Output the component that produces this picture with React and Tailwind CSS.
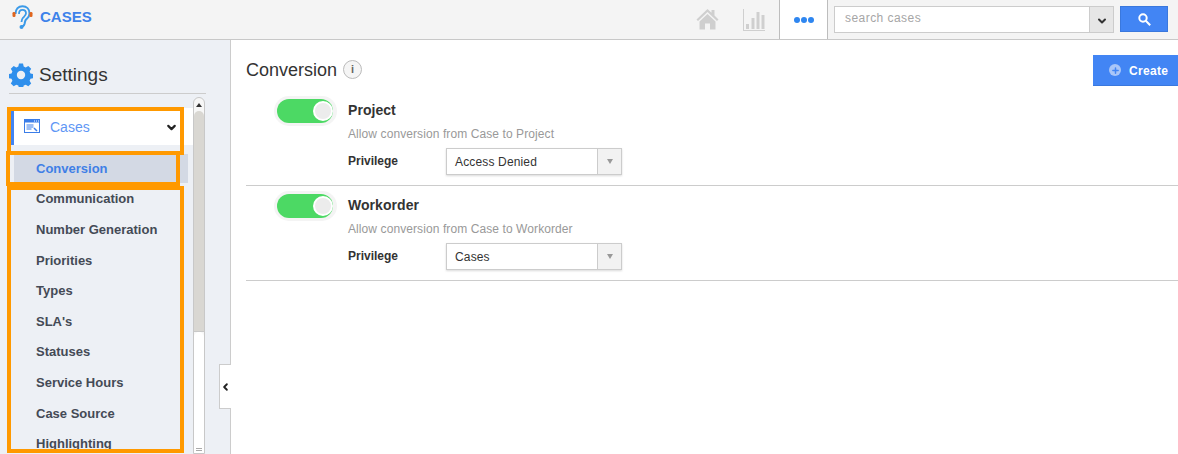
import { ChevronDown, ChevronLeft, Plus } from 'lucide-react';

const MENU_ITEMS = ['Communication', 'Number Generation', 'Priorities', 'Types', "SLA's", 'Statuses', 'Service Hours', 'Case Source', 'Highlighting'];

const Logo = () => (
  <svg width="21" height="25" viewBox="0 0 21 25" fill="none">
    <path d="M3.5 9C3.5 4 6.5 1.2 10.5 1.2C14.5 1.2 17.5 4 17.5 8.5C17.5 12 15.5 13 14 14.5C13 15.5 13 17 12.5 19C12 20.5 11 21.5 9.5 21.5" stroke="#3b9ae8" strokeWidth="2" />
    <path d="M7 9C7 6.5 8.5 4.8 10.5 4.8C12.5 4.8 14 6.3 14 8.3C14 10.5 12 11.5 10.8 13C10 14 9.7 15.5 9.5 17" stroke="#3b9ae8" strokeWidth="1.8" />
    <circle cx="9.5" cy="22" r="2" fill="#3b9ae8" />
    <rect x="0.5" y="7" width="3" height="5" rx="1.2" fill="#e0661f" />
    <rect x="17.5" y="7" width="3" height="5" rx="1.2" fill="#e0661f" />
  </svg>
);

const HomeIcon = () => (
  <svg width="23" height="21" viewBox="0 0 23 21" fill="#cfcfcf">
    <path d="M11.5 0L0.5 10.5L2 12L11.5 3L21 12L22.5 10.5L18.5 6.6V1H15.5V3.8Z" />
    <path d="M11.5 5L3.5 12.5V20.5H9V14.5H14V20.5H19.5V12.5Z" />
  </svg>
);

const ChartIcon = () => (
  <svg width="22" height="22" viewBox="0 0 22 22" fill="#cfcfcf">
    <rect x="0" y="0" width="1" height="22" />
    <rect x="0" y="21" width="22" height="1" />
    <rect x="3" y="15" width="3" height="5" />
    <rect x="8.5" y="9" width="3" height="11" />
    <rect x="13.5" y="3" width="3" height="17" />
    <rect x="18.5" y="6" width="3" height="14" />
  </svg>
);

const SearchGlyph = () => (
  <svg width="13" height="13" viewBox="0 0 13 13" fill="none" stroke="#ffffff">
    <circle cx="5" cy="5" r="3.7" strokeWidth="2" />
    <path d="M7.8 7.8L12.2 12.2" strokeWidth="2" />
  </svg>
);

const GearIcon = () => (
  <svg width="24" height="24" viewBox="0 0 24 24" fill="#2f8fec">
    <path d="M10 1h4l.7 3 2 .9 2.6-1.6 2.9 2.9-1.6 2.6.9 2 3 .7v4l-3 .7-.9 2 1.6 2.6-2.9 2.9-2.6-1.6-2 .9-.7 2.6h-4l-.7-2.6-2-.9-2.6 1.6-2.9-2.9 1.6-2.6-.9-2-3-.7v-4l3-.7.9-2-1.6-2.6 2.9-2.9 2.6 1.6 2-.9z" transform="translate(0 -0.4)" />
    <circle cx="12" cy="12" r="4.2" fill="#edf0f5" />
  </svg>
);

const CasesIcon = () => (
  <svg width="16" height="14" viewBox="0 0 16 14" fill="none">
    <rect x="0.5" y="0.5" width="15" height="13" stroke="#3b7de8" />
    <rect x="0.5" y="0.5" width="15" height="3" fill="#3b7de8" />
    <path d="M10 2h1M12 2h1M14 2h1" stroke="#fff" />
    <path d="M2.5 6h7M2.5 8h7M2.5 10h5" stroke="#3b7de8" />
    <path d="M10 9l3 3" stroke="#3b7de8" strokeWidth="1.5" />
  </svg>
);

const Toggle = () => (
  <div className="w-[63px] h-[30px] rounded-full bg-[#f4f4f4] p-[3px] shrink-0">
    <div className="h-[24px] w-[56px] rounded-full bg-[#4cd964] flex items-center justify-end">
      <div className="w-[20px] h-[20px] rounded-full bg-[#ececec] border-2 border-white" />
    </div>
  </div>
);

const ConversionRow = ({ title, description, privilege, rowClass }) => (
  <div className={`flex border-b border-[#cccccc] ${rowClass}`}>
    <div className="w-[102px] pl-[28px] -mt-[1px]">
      <Toggle />
    </div>
    <div className="flex-1">
      <div className="text-[14px] leading-[20px] font-bold text-[#333333] mt-[3px] tracking-[0.05px]">{title}</div>
      <div className="text-[12px] leading-[16px] text-[#999999] mt-[6px] tracking-[0.09px]">{description}</div>
      <div className="flex items-center mt-[6px]">
        <div className="w-[98px] text-[12px] font-bold text-[#333333] -mt-[2px]">{privilege.label}</div>
        <div className="w-[176px] h-[27px] flex border border-[#cccccc] bg-white shadow-[0_1px_2px_rgba(0,0,0,0.15)]">
          <div className="flex-1 pl-[8px] text-[12px] leading-[26px] text-[#333333] tracking-[0.15px]">{privilege.value}</div>
          <div className="w-[24px] bg-[#f2f2f2] border-l border-[#cccccc] flex items-center justify-center">
            <div className="w-0 h-0 border-l-[3.5px] border-r-[3.5px] border-t-[5px] border-l-transparent border-r-transparent border-t-[#999999]" />
          </div>
        </div>
      </div>
    </div>
  </div>
);

const App = () => {
  return (
    <div className="relative w-[1178px] h-[454px] overflow-hidden bg-white font-['Liberation_Sans',Arial,sans-serif]">
      {/* Header */}
      <header className="h-[40px] flex items-center bg-[#f4f4f4] border-b border-[#c8c8c8]">
        <div className="ml-[12px] mb-[4px]">
          <Logo />
        </div>
        <div className="ml-[7px] mb-[4px] text-[15px] font-bold text-[#3d82ea]">CASES</div>
        <div className="ml-auto flex items-center h-full">
          <div className="flex items-center gap-[24px] mr-[14px]">
            <HomeIcon />
            <ChartIcon />
          </div>
          <div className="w-[49px] h-full bg-white border-x border-[#bdbdbd] flex items-center justify-center gap-[1px]">
            <span className="w-[6px] h-[6px] rounded-full bg-[#2e86f0]" />
            <span className="w-[6px] h-[6px] rounded-full bg-[#2e86f0]" />
            <span className="w-[6px] h-[6px] rounded-full bg-[#2e86f0]" />
          </div>
          <div className="ml-[6px] mb-[1px] w-[280px] h-[27px] flex border border-[#cccccc] bg-white">
            <div className="flex-1 pl-[10px] text-[12px] leading-[23px] text-[#a6a6a6] tracking-[0.45px]">search cases</div>
            <div className="w-[24px] bg-[#e6e6e6] border-l border-[#cccccc] flex items-center justify-center pt-[4px]">
              <ChevronDown size={12} strokeWidth={4} className="text-[#333333]" />
            </div>
          </div>
          <div className="ml-[6px] mr-[10px] mb-[1px] w-[48px] h-[26px] bg-[#4285f4] border border-[#3a78dd] flex items-center justify-center">
            <SearchGlyph />
          </div>
        </div>
      </header>

      <div className="flex h-[414px]">
        {/* Sidebar */}
        <aside className="w-[231px] shrink-0 bg-[#edf0f5] border-r border-[#cccccc] pl-[9px] pt-[20px]">
          <div className="w-[197px] h-[34px] flex items-center border-b border-[#cccccc] pb-[3px]">
            <GearIcon />
            <span className="ml-[6px] text-[19px] text-[#333333]">Settings</span>
          </div>
          <div className="flex mt-[3px]">
            <div className="w-[184px] mt-[11px] overflow-hidden">
              <div className="h-[37px] flex items-center bg-white border-l-[3px] border-[#4285f4] ml-[2px] w-[182px]">
                <div className="ml-[10px] -mt-[1px]">
                  <CasesIcon />
                </div>
                <span className="ml-[10px] mt-[1px] text-[14px] text-[#5f97f5]">Cases</span>
                <ChevronDown size={13} strokeWidth={4} className="ml-auto mr-[15px] mt-[2px] text-[#222222]" />
              </div>
              <div className="h-[29px] mt-[9px] ml-[5px] w-[174px] bg-[#d3d9e4] flex items-center pl-[22px] text-[13px] font-bold text-[#3f7fe6]">
                Conversion
              </div>
              <div className="mt-[0.8px]">
                {MENU_ITEMS.map((label) => (
                  <div key={label} className="h-[30.6px] flex items-center pl-[27px] text-[13px] font-bold text-[#444a55]">
                    {label}
                  </div>
                ))}
              </div>
            </div>
            {/* Scrollbar */}
            <div className="w-[12px] h-[357px] flex flex-col border border-[#c8c8c8] rounded-t-[6px] bg-[#f7f7f7] overflow-hidden">
              <div className="h-[13px] flex items-center justify-center shrink-0">
                <div className="w-0 h-0 border-l-[3px] border-r-[3px] border-b-[4px] border-l-transparent border-r-transparent border-b-[#333333]" />
              </div>
              <div className="h-[221px] shrink-0 bg-[#d9d7d2] rounded-t-[5px] border-b border-[#c8c8c8]" />
              <div className="flex-1 bg-white rounded-t-[5px] flex flex-col items-center justify-end pb-[2px] gap-[1px]">
                <div className="w-[6px] h-px bg-[#aaaaaa]" />
                <div className="w-[6px] h-px bg-[#aaaaaa]" />
              </div>
            </div>
          </div>
        </aside>

        {/* Main */}
        <main className="relative flex-1 pl-[15px]">
          <div className="absolute left-[-12px] top-[324px] w-[12px] h-[45px] bg-white border border-r-0 border-[#cccccc] flex items-center justify-center">
            <ChevronLeft size={12} strokeWidth={4} className="text-[#222222]" />
          </div>
          <div className="flex items-start h-[57px]">
            <h1 className="mt-[19px] text-[18px] leading-[22px] text-[#333333]">Conversion</h1>
            <div className="mt-[20px] ml-[6px] w-[19px] h-[19px] rounded-full bg-[#f5f5f5] border border-[#bbbbbb] flex items-center justify-center text-[11px] font-bold text-[#666666]">
              i
            </div>
            <div className="ml-auto mt-[15px] w-[85px] h-[31px] bg-[#4285f4] border-b border-[#3a78dd] flex items-center pl-[16px] gap-[8px] text-[12px] tracking-[0.3px] font-bold text-white">
              <span className="w-[12px] h-[12px] rounded-full bg-[#a9c6f8] flex items-center justify-center">
                <Plus size={9} strokeWidth={4} className="text-[#4285f4]" />
              </span>
              <span className="mt-[1px]">Create</span>
            </div>
          </div>
          <ConversionRow
            title="Project"
            description="Allow conversion from Case to Project"
            privilege={{ label: 'Privilege', value: 'Access Denied' }}
            rowClass="h-[89px]"
          />
          <ConversionRow
            title="Workorder"
            description="Allow conversion from Case to Workorder"
            privilege={{ label: 'Privilege', value: 'Cases' }}
            rowClass="h-[95px] pt-[6px]"
          />
        </main>
      </div>

      {/* Orange highlight boxes */}
      <div className="absolute left-[7px] top-[107px] w-[177px] h-[48px] border-[4px] border-[#ff9900]" />
      <div className="absolute left-[6px] top-[151px] w-[174px] h-[35px] border-[4px] border-[#ff9900]" />
      <div className="absolute left-[7px] top-[186px] w-[177px] h-[267px] border-[4px] border-[#ff9900]" />
    </div>
  );
};

export default App;
